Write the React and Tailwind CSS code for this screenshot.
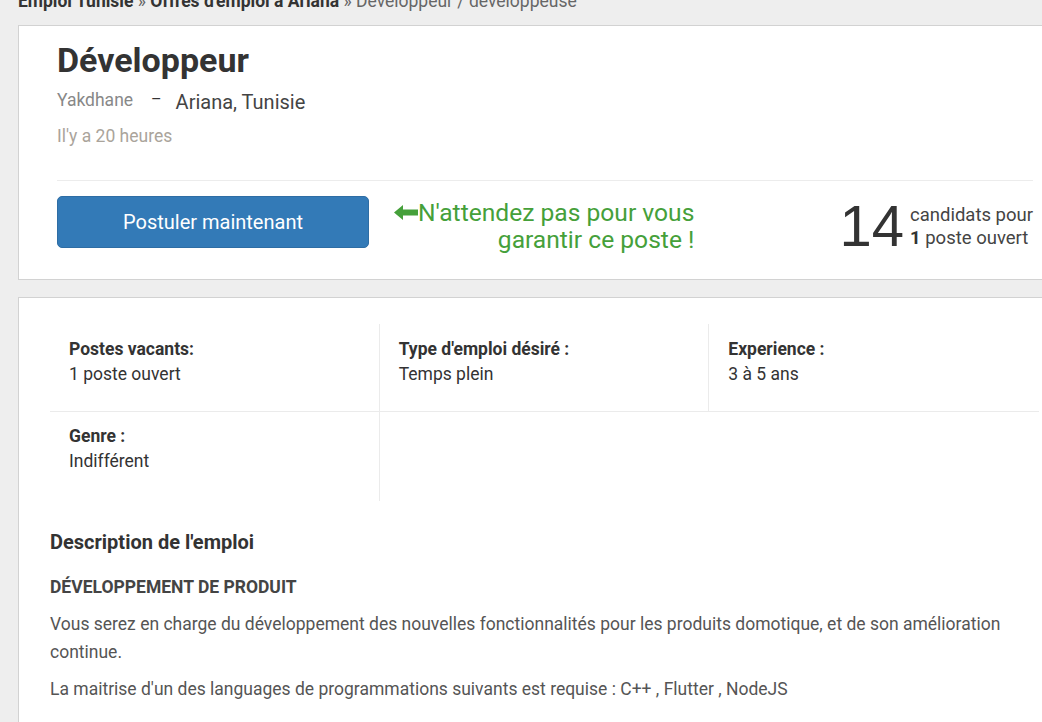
import React from 'react';

const details = [
    { label: 'Postes vacants:', value: '1 poste ouvert' },
    { label: "Type d'emploi désiré :", value: 'Temps plein' },
    { label: 'Experience :', value: '3 à 5 ans' },
];

const ArrowLeft = () => (
    <svg width="24" height="15" viewBox="0 0 24 15" className="shrink-0 mt-[6px]">
        <path d="M0 7.5 L9 0 L9 4.5 L24 4.5 L24 10.5 L9 10.5 L9 15 Z" fill="#45a03a" />
    </svg>
);

const App = () => {
    return (
        <div className="min-h-screen w-[1042px] overflow-hidden bg-[#eeeeee] font-['Roboto',sans-serif]">
            <div className="pl-[18px] -mt-[9px] h-[21px] text-[17.5px] leading-[20px] whitespace-nowrap">
                <span className="font-bold text-[#333]">Emploi Tunisie</span>
                <span className="text-[#666]"> » </span>
                <span className="font-bold text-[#333]">Offres d'emploi à Ariana</span>
                <span className="text-[#666]"> » Développeur / développeuse</span>
            </div>

            <div className="ml-[18px] mt-[13px] w-[1054px] bg-white border border-[#d2d2d2] pl-[38px] pr-[38px] pt-[12px] pb-[24px]">
                <h1 className="text-[34px] leading-[44px] font-bold text-[#333]">Développeur</h1>
                <div className="flex items-center mt-[5px] h-[26px]">
                    <span className="text-[17.5px] text-[#888]">Yakdhane</span>
                    <span className="ml-[18px] text-[16px] text-[#333]">–</span>
                    <span className="ml-[14px] text-[20px] text-[#444] mt-[3px]">Ariana, Tunisie</span>
                </div>
                <div className="mt-[11px] text-[17.5px] leading-[24px] text-[#aaa49b]">Il'y a 20 heures</div>

                <div className="mt-[32px] border-t border-[#ececec] pt-[15px] flex items-start">
                    <button className="w-[312px] h-[52px] rounded-[5px] bg-[#337ab7] border border-[#2e6da4] text-white text-[20px]">
                        Postuler maintenant
                    </button>
                    <div className="ml-[25px] flex items-start mt-[3px]">
                        <ArrowLeft />
                        <p className="text-[24.6px] leading-[27px] text-[#45a03a] text-right">
                            N'attendez pas pour vous
                            <br />
                            garantir ce poste !
                        </p>
                    </div>
                    <div className="ml-auto flex items-center text-[#333]">
                        <span className="font-['Liberation_Sans',sans-serif] text-[58px] leading-[58px] mt-[1px]">14</span>
                        <div className="ml-[6px] text-[18.5px] leading-[23px] text-[#444] mt-[2px]">
                            <div>candidats pour</div>
                            <div><b className="text-[#333]">1</b> poste ouvert</div>
                        </div>
                    </div>
                </div>
            </div>

            <div className="ml-[18px] mt-[17px] w-[1054px] bg-white border border-[#d2d2d2] pl-[31px] pr-[32px] pt-[26px] pb-[40px]">
                <div className="grid grid-cols-3">
                    {details.map((d, i) => (
                        <div
                            key={d.label}
                            className={`h-[88px] px-[19px] pt-[13px] border-b border-[#ebebeb] ${i < 2 ? 'border-r' : ''}`}
                        >
                            <div className="text-[17.5px] leading-[25px] font-bold text-[#333]">{d.label}</div>
                            <div className="text-[17.5px] leading-[25px] text-[#333]">{d.value}</div>
                        </div>
                    ))}
                    <div className="h-[89px] px-[19px] pt-[12px] border-r border-[#ebebeb]">
                        <div className="text-[17.5px] leading-[25px] font-bold text-[#333]">Genre :</div>
                        <div className="text-[17.5px] leading-[25px] text-[#333]">Indifférent</div>
                    </div>
                </div>

                <h2 className="mt-[29px] text-[20px] leading-[24px] font-bold text-[#333]">Description de l'emploi</h2>
                <h3 className="mt-[22px] text-[17.5px] leading-[22px] font-bold text-[#444]">DÉVELOPPEMENT DE PRODUIT</h3>
                <p className="mt-[12px] text-[17.5px] leading-[28px] text-[#555]">
                    Vous serez en charge du développement des nouvelles fonctionnalités pour les produits domotique, et de son amélioration continue.
                </p>
                <p className="mt-[9px] text-[17.5px] leading-[28px] text-[#555]">
                    La maitrise d'un des languages de programmations suivants est requise : C++ , Flutter , NodeJS
                </p>
            </div>
        </div>
    );
};

export default App;
